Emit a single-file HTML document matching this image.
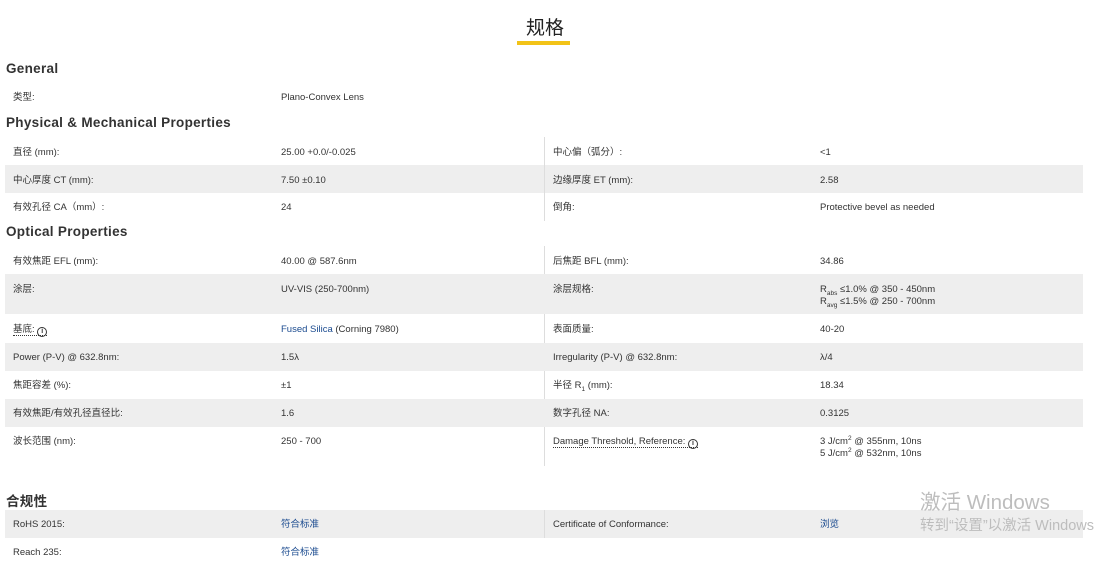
<!DOCTYPE html>
<html><head><meta charset="utf-8"><style>
*{margin:0;padding:0;box-sizing:border-box}
body{width:1103px;height:561px;background:#fff;position:relative;overflow:hidden;font-family:"Liberation Sans","Noto Sans CJK SC",sans-serif;color:#333;font-size:9.5px}
.a{position:absolute;white-space:nowrap;line-height:12px}
.h{position:absolute;left:6px;font-size:13.5px;font-weight:bold;color:#333;letter-spacing:0.3px}
.g{position:absolute;left:5px;width:1078px;background:#eeeeee}
.sep{position:absolute;left:544px;width:1px;background:#ddd}
.lk{color:#1a4a8f}
.u{border-bottom:1px dotted #333}
.i{display:inline-block;width:10px;height:10px;border:1.3px solid #333;border-radius:50%;font-size:7px;line-height:7px;text-align:center;font-weight:bold;vertical-align:-1px}
sub,sup{font-size:6.5px;line-height:0}
</style></head><body>
<div class="a" style="left:526px;top:18px;font-size:19px;line-height:22px;color:#222">规格</div>
<div style="position:absolute;left:517px;top:41px;width:53px;height:4px;background:#f2c318"></div>

<div class="h" style="top:61px">General</div>
<div class="a" style="left:13px;top:92px">类型:</div>
<div class="a" style="left:281px;top:92px">Plano-Convex Lens</div>

<div class="h" style="top:115px">Physical &amp; Mechanical Properties</div>
<div class="g" style="top:165px;height:28px"></div>
<div class="sep" style="top:137px;height:84px"></div>
<div class="a" style="left:13px;top:147px">直径 (mm):</div><div class="a" style="left:281px;top:147px">25.00 +0.0/-0.025</div>
<div class="a" style="left:553px;top:147px">中心偏（弧分）:</div><div class="a" style="left:820px;top:147px">&lt;1</div>
<div class="a" style="left:13px;top:175px">中心厚度 CT (mm):</div><div class="a" style="left:281px;top:175px">7.50 ±0.10</div>
<div class="a" style="left:553px;top:175px">边缘厚度 ET (mm):</div><div class="a" style="left:820px;top:175px">2.58</div>
<div class="a" style="left:13px;top:202px">有效孔径 CA（mm）:</div><div class="a" style="left:281px;top:202px">24</div>
<div class="a" style="left:553px;top:202px">倒角:</div><div class="a" style="left:820px;top:202px">Protective bevel as needed</div>

<div class="h" style="top:224px">Optical Properties</div>
<div class="sep" style="top:246px;height:220px"></div>
<div class="g" style="top:274px;height:40px"></div>
<div class="g" style="top:343px;height:28px"></div>
<div class="g" style="top:399px;height:28px"></div>
<div class="a" style="left:13px;top:256px">有效焦距 EFL (mm):</div><div class="a" style="left:281px;top:256px">40.00 @ 587.6nm</div>
<div class="a" style="left:553px;top:256px">后焦距 BFL (mm):</div><div class="a" style="left:820px;top:256px">34.86</div>
<div class="a" style="left:13px;top:284px">涂层:</div><div class="a" style="left:281px;top:284px">UV-VIS (250-700nm)</div>
<div class="a" style="left:553px;top:284px">涂层规格:</div><div class="a" style="left:820px;top:284px">R<sub>abs</sub> ≤1.0% @ 350 - 450nm<br>R<sub>avg</sub> ≤1.5% @ 250 - 700nm</div>
<div class="a" style="left:13px;top:324px"><span class="u">基底: <span class="i">i</span></span></div><div class="a" style="left:281px;top:324px"><span class="lk">Fused Silica</span> (Corning 7980)</div>
<div class="a" style="left:553px;top:324px">表面质量:</div><div class="a" style="left:820px;top:324px">40-20</div>
<div class="a" style="left:13px;top:352px">Power (P-V) @ 632.8nm:</div><div class="a" style="left:281px;top:352px">1.5λ</div>
<div class="a" style="left:553px;top:352px">Irregularity (P-V) @ 632.8nm:</div><div class="a" style="left:820px;top:352px">λ/4</div>
<div class="a" style="left:13px;top:380px">焦距容差 (%):</div><div class="a" style="left:281px;top:380px">±1</div>
<div class="a" style="left:553px;top:380px">半径 R<sub>1</sub> (mm):</div><div class="a" style="left:820px;top:380px">18.34</div>
<div class="a" style="left:13px;top:408px">有效焦距/有效孔径直径比:</div><div class="a" style="left:281px;top:408px">1.6</div>
<div class="a" style="left:553px;top:408px">数字孔径 NA:</div><div class="a" style="left:820px;top:408px">0.3125</div>
<div class="a" style="left:13px;top:436px">波长范围 (nm):</div><div class="a" style="left:281px;top:436px">250 - 700</div>
<div class="a" style="left:553px;top:436px"><span class="u">Damage Threshold, Reference: <span class="i">i</span></span></div><div class="a" style="left:820px;top:436px">3 J/cm<sup>2</sup> @ 355nm, 10ns<br>5 J/cm<sup>2</sup> @ 532nm, 10ns</div>

<div class="h" style="top:490px">合规性</div>
<div class="g" style="top:510px;height:28px"></div>
<div class="sep" style="top:510px;height:28px"></div>
<div class="a" style="left:13px;top:519px">RoHS 2015:</div><div class="a lk" style="left:281px;top:519px">符合标准</div>
<div class="a" style="left:553px;top:519px">Certificate of Conformance:</div><div class="a lk" style="left:820px;top:519px">浏览</div>
<div class="a" style="left:13px;top:547px">Reach 235:</div><div class="a lk" style="left:281px;top:547px">符合标准</div>

<div class="a" style="left:920px;top:491px;font-size:20.5px;line-height:24px;color:#bdbdbd">激活 Windows</div>
<div class="a" style="left:920px;top:518px;font-size:14.5px;line-height:17px;color:#bdbdbd">转到“设置”以激活 Windows</div>
</body></html>
